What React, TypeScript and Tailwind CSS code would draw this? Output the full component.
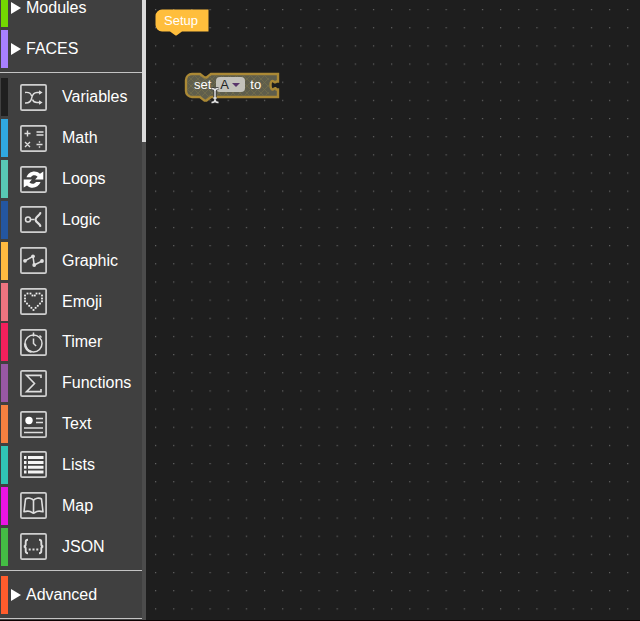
import type { ReactNode } from "react";

function IconBox({ children }: { children: ReactNode }) {
  return (
    <svg
      viewBox="0 0 27 27"
      className="h-[27px] w-[27px] shrink-0"
      fill="none"
      stroke="#dedede"
      strokeWidth="1.3"
      aria-hidden="true"
    >
      <rect x="0.9" y="0.9" width="25.2" height="25.2" rx="1.2" strokeWidth="1.7" stroke="#cfcfcf" />
      {children}
    </svg>
  );
}

const heart = [
  [7.5, 5.5], [10.5, 5.5], [16.5, 5.5], [19.5, 5.5],
  [5, 7.5], [12.5, 7.5], [14.8, 7.5], [22, 7.5], [5, 10.5], [22, 10.5], [5, 13.3], [22, 13.3],
  [7, 15.6], [20, 15.6], [9.2, 17.8], [17.8, 17.8], [11.4, 19.8], [15.6, 19.8], [13.5, 22],
];

const icons: Record<string, ReactNode> = {
  Variables: (
    <>
      <path d="M5 8.500c4-.500 6 .800 6.600 3.600M5 19c4.500.300 6-1.500 6.700-5 .700-3.500 2-5.500 5.300-5.500h3M12.500 15.500c.700 2.400 2.200 3 4.500 3h3" strokeWidth="1.400" />
      <path d="M19 6.200l3.600 2.300L19 10.800zM19 16.200l3.600 2.300-3.600 2.300z" fill="#dedede" stroke="none" />
    </>
  ),
  Math: (
    <path d="M4.500 8.500h6M7.500 5.500v6M16.500 7h7M16.500 10h7M5 17l5 5M10 17l-5 5M16.500 19.500h6M19.500 16.300v1.500M19.500 21.200v1.500" strokeWidth="1.400" />
  ),
  Loops: (
    <g fill="#fff" stroke="none">
      <path d="M6.500 11.200C8.500 5.500 15.500 3.500 20 7.800l3.300-2.300v8h-8.200l2.500-2.800c-2.500-2-5.200-1.700-6.600.500z" />
      <path d="M20.500 16C18.500 21.700 11.500 23.600 7 19.400l-3.300 2.200v-8h8.200l-2.500 2.900c2.500 2 5.200 1.600 6.600-.500z" />
    </g>
  ),
  Logic: (
    <>
      <circle cx="8" cy="13.500" r="2.500" strokeWidth="1.500" />
      <path d="M10.500 13.500h4" strokeWidth="1.500" />
      <path d="M20.300 7c-.500 2.500-4.800 3.500-4.800 6.500s4.300 4 4.800 6.500" strokeWidth="2.200" strokeLinecap="round" />
    </>
  ),
  Graphic: (
    <>
      <path d="M5 13.800l8-4.500 1.200 8.700 8-4" strokeWidth="1.500" />
      <g fill="#dedede" stroke="none">
        <circle cx="5" cy="13.800" r="1.900" />
        <circle cx="13" cy="9.300" r="1.900" />
        <circle cx="14.200" cy="18" r="1.900" />
        <circle cx="22" cy="14" r="1.900" />
      </g>
    </>
  ),
  Emoji: (
    <g fill="#f0f0f0" stroke="none">
      {heart.map(([x, y]) => (
        <rect key={`${x}-${y}`} x={x - 0.9} y={y - 0.9} width="1.800" height="1.800" />
      ))}
    </g>
  ),
  Timer: (
    <>
      <circle cx="13.500" cy="14.500" r="8.500" strokeWidth="1.500" />
      <path d="M13.500 3.500v4M13.500 9.500v5l2.600 2.500M19.500 6.500l2 2" strokeWidth="1.500" />
      <path d="M5 14.500c0 4.500 3 8 6.500 8.400" strokeWidth="2.400" />
    </>
  ),
  Functions: <path d="M21 8V5.400H6.500l8 8.100-8 8.100H21V19" strokeWidth="1.600" />,
  Text: (
    <>
      <circle cx="9" cy="9.500" r="3.700" fill="#fff" stroke="none" />
      <path d="M16 7.500h7M16 11.500h7M4 17h19M4 21.500h19" strokeWidth="1.500" />
    </>
  ),
  Lists: (
    <path
      d="M4 6.500h2.500M8 6.500h15.500M4 11.500h2.500M8 11.500h15.500M4 16.300h2.500M8 16.300h15.500M4 21h2.500M8 21h15.500"
      strokeWidth="2.900"
      stroke="#f4f4f4"
    />
  ),
  Map: (
    <path
      d="M13.500 8.500C12.500 6 7.500 5.500 5.500 7L4 19.800c2.600-.800 6.500-.600 8.200.900.800.700 1.800.700 2.600 0 1.700-1.500 5.600-1.700 8.200-.900L21.500 7c-2-1.500-7-1-8 1.500zM13.500 8.500v12.500"
      strokeWidth="1.600"
      strokeLinejoin="round"
    />
  ),
  JSON: (
    <>
      <path d="M8 6.800c-2 0-2.300.700-2.300 2.200v2.300c0 1.400-.500 2-1.900 2.200 1.400.200 1.900.800 1.900 2.200V18c0 1.500.300 2.200 2.300 2.200M19 6.800c2 0 2.300.700 2.300 2.200v2.300c0 1.400.500 2 1.900 2.200-1.400.200-1.900.800-1.900 2.200V18c0 1.500-.300 2.200-2.300 2.200" strokeWidth="1.900" />
      <path d="M8.700 16.500h2M12.500 16.500h2M16.300 16.500h2" strokeWidth="2" />
    </>
  ),
};

const categories = [
  { name: "Variables", bar: "bg-[#1f1f1f]" },
  { name: "Math", bar: "bg-[#30a8e0]" },
  { name: "Loops", bar: "bg-[#58c8b4]" },
  { name: "Logic", bar: "bg-[#2456a0]" },
  { name: "Graphic", bar: "bg-[#ffba40]" },
  { name: "Emoji", bar: "bg-[#ee7480]" },
  { name: "Timer", bar: "bg-[#f2205c]" },
  { name: "Functions", bar: "bg-[#9858a4]" },
  { name: "Text", bar: "bg-[#f58040]" },
  { name: "Lists", bar: "bg-[#30c4b4]" },
  { name: "Map", bar: "bg-[#ea14e4]" },
  { name: "JSON", bar: "bg-[#44bc44]" },
];

function Category({ name, bar }: { name: string; bar: string }) {
  return (
    <button type="button" className="flex min-h-0 w-full flex-1 items-center text-left">
      <span className={`h-[38px] w-[7px] shrink-0 ${bar}`} />
      <span className="flex items-center gap-[15px] pl-3">
        <IconBox>{icons[name]}</IconBox>
        {name}
      </span>
    </button>
  );
}

function Group({ name, bar }: { name: string; bar: string }) {
  return (
    <button type="button" aria-expanded="false" className="flex h-[41px] w-full shrink-0 items-center text-left">
      <span className={`h-[38px] w-[7px] shrink-0 ${bar}`} />
      <span className="flex items-center gap-[5px] pl-[3px]">
        <svg viewBox="0 0 10 12" className="h-3 w-[10px]" fill="#fff" aria-hidden="true">
          <path d="M0 0l10 6-10 6z" />
        </svg>
        {name}
      </span>
    </button>
  );
}

function Separator() {
  return <hr className="mt-[3px] mb-[3px] h-px shrink-0 border-0 bg-[#c4c4c4]" />;
}

function Toolbox() {
  return (
    <nav aria-label="Block categories" className="flex shrink-0 bg-[#404040]">
      <div className="flex w-[142px] flex-col overflow-hidden text-base leading-5 text-white">
        <div className="-mt-[13px] flex shrink-0 flex-col pl-px">
          <Group name="Modules" bar="bg-[#74d800]" />
          <Group name="FACES" bar="bg-[#a880ff]" />
        </div>
        <Separator />
        <div className="mt-px flex h-[490px] shrink-0 flex-col pl-px">
          {categories.map((c) => (
            <Category key={c.name} {...c} />
          ))}
        </div>
        <Separator />
        <div className="shrink-0 pl-px">
          <Group name="Advanced" bar="bg-[#ff5c2c]" />
        </div>
        <Separator />
      </div>
      <div className="w-1 bg-[#4c4c4c]">
        <div className="h-[142px] bg-[#dadada]" />
      </div>
    </nav>
  );
}

function Grid() {
  return (
    <svg className="absolute inset-0 h-full w-full" aria-hidden="true">
      <defs>
        <pattern id="dots" x="9" y="9" width="18.160" height="18.160" patternUnits="userSpaceOnUse">
          <rect width="1.200" height="1.200" fill="#666" />
        </pattern>
      </defs>
      <rect width="100%" height="100%" fill="url(#dots)" />
    </svg>
  );
}

function SetupBlock() {
  return (
    <div className="absolute top-[9px] left-[9px] h-[27px] w-[54px]">
      <svg viewBox="0 0 54 27" className="absolute inset-0 h-full w-full" aria-hidden="true">
        <path d="M7 .500h46.500v22H27l-5.500 4h-1l-5.500-4H7a6.500 6.500 0 0 1-6.500-6.500V7A6.500 6.500 0 0 1 7 .500z" fill="#ffbe3c" />
      </svg>
      <div className="relative pt-1 pl-[9px] text-[13px] leading-4 text-white">Setup</div>
    </div>
  );
}

function SetBlock() {
  return (
    <div className="absolute top-[72px] left-[38px] h-[30px] w-[96px]">
      <svg viewBox="0 0 96 30" className="absolute inset-0 h-full w-full" aria-hidden="true">
        <defs>
          <pattern id="hatch" width="7" height="7" patternUnits="userSpaceOnUse">
            <path d="M0 0l7 7M7 0L0 7" stroke="#726d4c" strokeWidth="0.800" />
          </pattern>
        </defs>
        <path d="M8 2h8l4.500 3.500h2L27 2h67v7.500h-1.500c-.500 1-1.500 1-2.500.200-2-1.500-3.500-.500-3.500 3.300s1.500 5.300 3.500 3.800c1-.800 2-.800 2.500.700H94V25H27l-4.500 3.500h-2L16 25H8a6 6 0 0 1-6-6V8a6 6 0 0 1 6-6z" fill="#5f5e4c" stroke="#ab8935" strokeWidth="2.400" />
        <path d="M8 3h8l5 3.500h1L27 3h58v21H27l-5 3.500h-1L16 24H8a5 5 0 0 1-5-5V8a5 5 0 0 1 5-5z" fill="url(#hatch)" />
      </svg>
      <div className="relative flex items-center gap-[5px] pt-[5px] pl-[10px] text-[13px] leading-4 text-white">
        <label htmlFor="variable">set</label>
        <div className="relative h-4">
          <select
            id="variable"
            defaultValue="A"
            className="h-[15px] w-[29px] appearance-none rounded-[4px] bg-[#c3c2bb] pl-1 text-[13px] leading-[15px] text-[#222] outline-none"
          >
            <option>A</option>
          </select>
          <svg viewBox="0 0 8 4" className="pointer-events-none absolute top-[6px] right-[5px] h-1 w-2" aria-hidden="true">
            <path d="M0 0h8L4 4z" fill="#59356b" />
          </svg>
        </div>
        <span>to</span>
      </div>
    </div>
  );
}

function TextCursor() {
  return (
    <svg viewBox="0 0 10 17" className="absolute top-[87px] left-[64px] h-[17px] w-[10px]" fill="none" aria-hidden="true">
      <path d="M1.500 1.500C4 1.500 5 2.500 5 4v9c0 1.500-1 2.500-3.500 2.500M8.500 1.500C6 1.500 5 2.500 5 4M5 13c0 1.500 1 2.500 3.500 2.500M3.300 11h3.400" stroke="#333" strokeWidth="3" />
      <path d="M1.500 1.500C4 1.500 5 2.500 5 4v9c0 1.500-1 2.500-3.500 2.500M8.500 1.500C6 1.500 5 2.500 5 4M5 13c0 1.500 1 2.500 3.500 2.500M3.300 11h3.400" stroke="#e4e4e4" strokeWidth="1.500" />
    </svg>
  );
}

export default function App() {
  return (
    <div className="flex h-screen overflow-hidden border-b border-[#0c0404] bg-[#1e1e1e] font-['Liberation_Sans',Arial,sans-serif]">
      <Toolbox />
      <main className="relative min-w-0 flex-1">
        <Grid />
        <SetupBlock />
        <SetBlock />
        <TextCursor />
      </main>
    </div>
  );
}
